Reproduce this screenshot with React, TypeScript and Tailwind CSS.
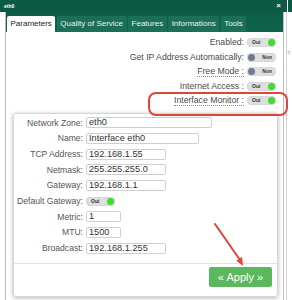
import React from "react";

const tabs = ["Parameters", "Quality of Service", "Features", "Informations", "Tools"];

type Sw = { label: string; on: boolean; dotted?: boolean };
const switches: Sw[] = [
  { label: "Enabled:", on: true },
  { label: "Get IP Address Automatically:", on: false },
  { label: "Free Mode :", on: false, dotted: true },
  { label: "Internet Access :", on: true },
  { label: "Interface Monitor :", on: true, dotted: true },
];

function Toggle({ on }: { on: boolean }) {
  return (
    <div className="flex h-[9px] w-[29px] items-center justify-between rounded-full bg-[#dedede] px-[1px] shadow-[inset_0_0_1px_rgba(0,0,0,0.25)]">
      {on ? (
        <>
          <span className="pl-[4px] text-[5px] font-bold leading-none text-[#333]">Oui</span>
          <span className="h-[7px] w-[7px] rounded-full bg-[#3ddc2f]" />
        </>
      ) : (
        <>
          <span className="h-[7px] w-[7px] rounded-full bg-[#6f7d8b]" />
          <span className="pr-[3px] text-[5px] font-bold leading-none text-[#333]">Non</span>
        </>
      )}
    </div>
  );
}

type Field = { label: string; value?: string; w?: number; toggle?: boolean };
const fields: Field[] = [
  { label: "Network Zone:", value: "eth0", w: 126 },
  { label: "Name:", value: "Interface eth0", w: 113 },
  { label: "TCP Address:", value: "192.168.1.55", w: 80 },
  { label: "Netmask:", value: "255.255.255.0", w: 80 },
  { label: "Gateway:", value: "192.168.1.1", w: 80 },
  { label: "Default Gateway:", toggle: true },
  { label: "Metric:", value: "1", w: 35 },
  { label: "MTU:", value: "1500", w: 35 },
  { label: "Broadcast:", value: "192.168.1.255", w: 80 },
];

export default function App() {
  return (
    <div className="relative h-[300px] w-[292px] overflow-hidden bg-white font-['Liberation_Sans',Arial,sans-serif]">
      {/* title bar */}
      <div className="flex h-[12px]">
        <div className="flex w-[287px] items-center justify-between bg-[#0b5a44] pl-[4px] pr-[6px]">
          <span className="text-[5px] font-bold leading-none text-white">eth0</span>
          <span className="text-[8px] font-bold leading-none text-white">×</span>
        </div>
        <div className="w-px bg-white" />
        <div className="flex-1 bg-[#0b5a44]" />
      </div>

      <div className="flex">
        <div className="ml-[5px] h-[288px] w-[279px] border-x border-[#bdbdbd]">
          {/* tabs */}
          <div className="flex h-[20px] items-end gap-[1.5px] bg-gradient-to-b from-[#0d5e47] to-[#0f644c] pl-[1px]">
            {tabs.map((t, i) => (
              <div
                key={t}
                className={`flex h-[16px] items-center px-[3.5px] text-[8px] leading-none ${
                  i === 0
                    ? "rounded-t-[2px] bg-white text-[#222]"
                    : "rounded-t-[2px] bg-[#1b6f56] text-[#e8f1ee]"
                }`}
              >
                {t}
              </div>
            ))}
          </div>

          {/* switches */}
          <div className="pt-[3.5px] pr-[7px]">
            {switches.map((s) => (
              <div key={s.label} className="flex h-[14.5px] items-center justify-end gap-[3px]">
                <span
                  className={`text-[8.7px] leading-none text-[#4a4a4a] ${
                    s.dotted ? "border-b border-dotted border-[#888] pb-[0.5px]" : ""
                  }`}
                >
                  {s.label}
                </span>
                <Toggle on={s.on} />
              </div>
            ))}
          </div>

          {/* card */}
          <div className="ml-[7px] mr-[5px] mt-[5px] rounded-[3px] border border-[#d6d6d6] pt-[1px] pb-[9px] shadow-[0_1px_4px_rgba(0,0,0,0.3)]">
            {fields.map((f) => (
              <div key={f.label} className="flex h-[15.7px] items-center">
                <span className="w-[69px] text-right text-[8.6px] leading-none text-[#555]">{f.label}</span>
                <div className="ml-[3px]">
                  {f.toggle ? (
                    <Toggle on />
                  ) : (
                    <div
                      className="flex h-[11px] items-center rounded-[2px] border border-[#cfcfcf] bg-white px-[2px] text-[9.2px] leading-none text-[#333]"
                      style={{ width: f.w }}
                    >
                      {f.value}
                    </div>
                  )}
                </div>
              </div>
            ))}
            <div className="mt-[6.5px] h-px bg-[#e2e2e2]" />
            <div className="flex justify-end pr-[5px] pt-[3.5px]">
              <button className="flex h-[20px] w-[63px] items-center justify-center rounded-[2px] bg-[#5cb85c] text-[11px] leading-none text-white">
                « Apply »
              </button>
            </div>
          </div>
        </div>
        <div className="ml-[2px] h-[288px] w-px bg-[#cfcfcf]" />
      </div>

      <span className="absolute left-[287px] top-[49px] text-[6px] text-[#999]">?</span>

      {/* annotation overlays */}
      <div className="absolute left-[148px] top-[92px] h-[24px] w-[140px] rounded-[8px] border-2 border-[#e0453a]" />
      <svg className="absolute left-0 top-0" width="292" height="300" viewBox="0 0 292 300">
        <line x1="215" y1="224" x2="240" y2="260" stroke="#e0453a" strokeWidth="2" strokeLinecap="round" />
        <polygon points="243,266 236.4,260.8 242,257" fill="#e0453a" />
      </svg>
    </div>
  );
}
